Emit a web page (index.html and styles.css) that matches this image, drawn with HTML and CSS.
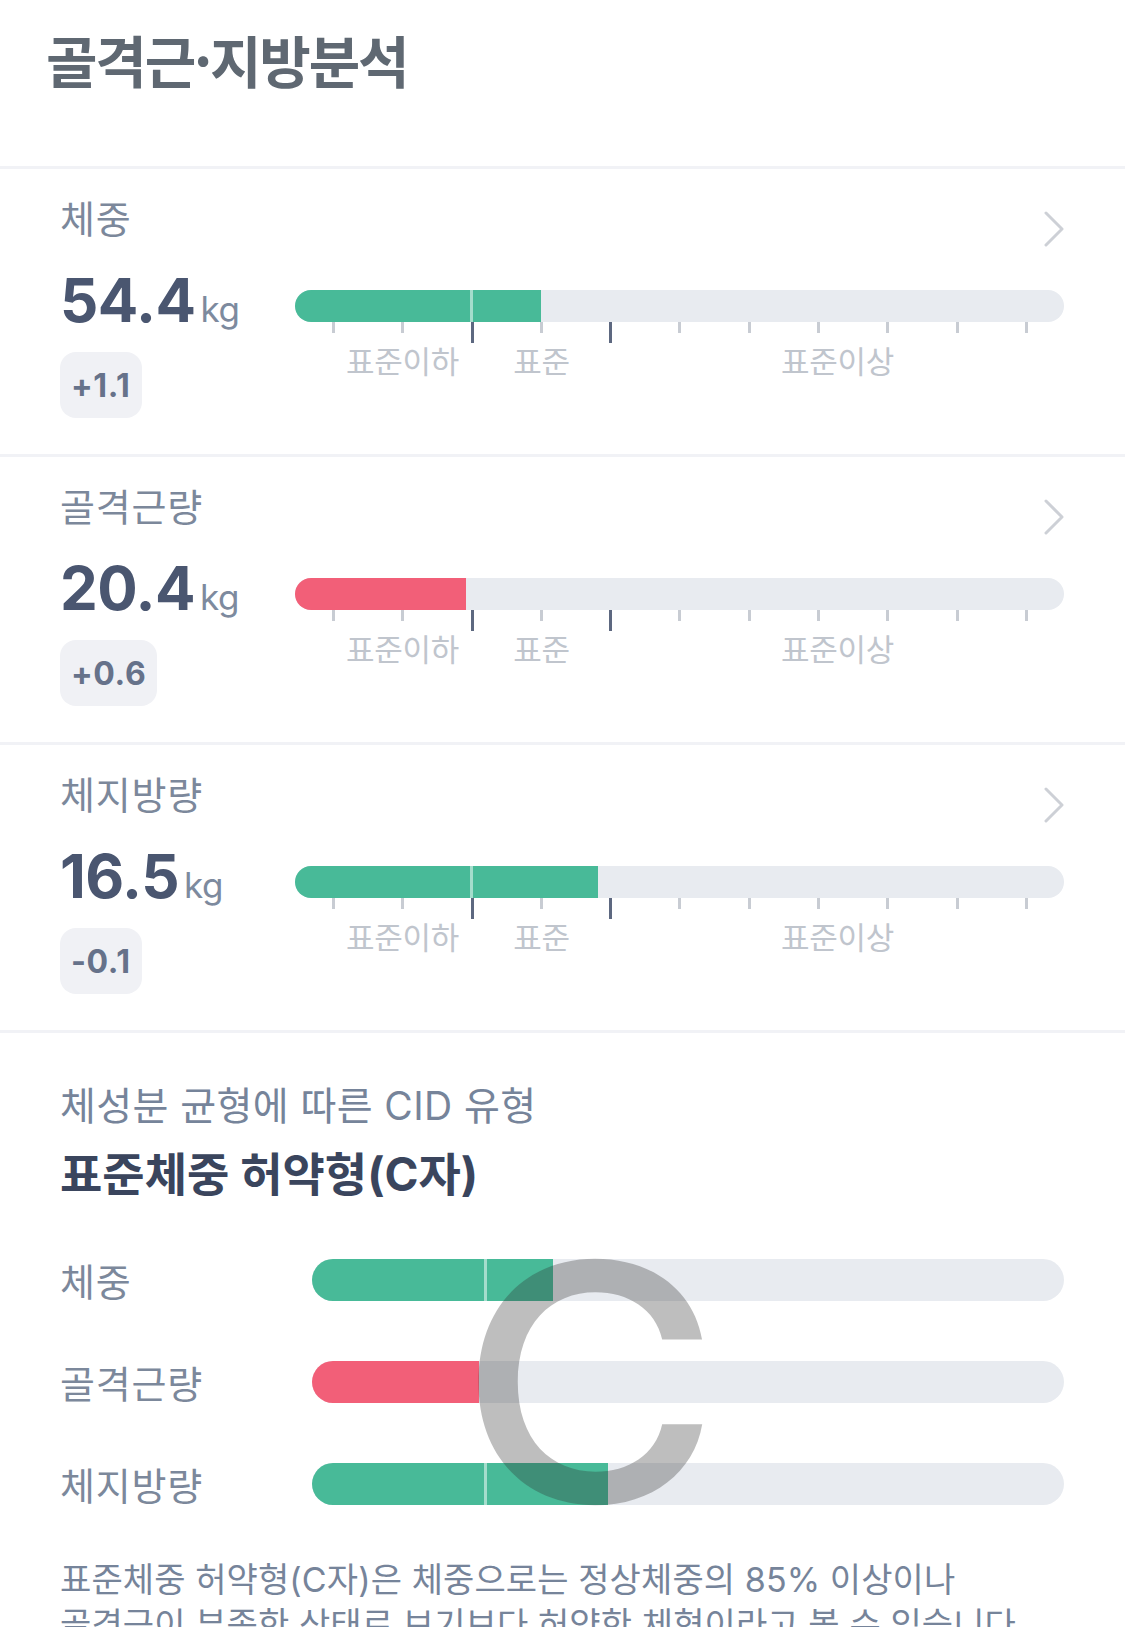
FILE: index.html
```html
<!DOCTYPE html>
<html lang="ko">
<head>
<meta charset="utf-8">
<title>골격근·지방분석</title>
<link rel="stylesheet" href="styles.css">
</head>
<body>
<div class="page">
  <header class="header">
    <h1 class="title">골격근·지방분석</h1>
  </header>

  <section class="metric">
    <div class="metric-head">
      <span class="metric-label">체중</span>
      <svg class="chevron" width="20" height="36" viewBox="0 0 20 36"><path d="M2 2 L18 18 L2 34" /></svg>
    </div>
    <div class="metric-body">
      <div class="metric-left">
        <div class="value"><span class="num">54.4</span><span class="unit">kg</span></div>
        <div class="badge">+1.1</div>
      </div>
      <div class="gauge">
        <div class="track"><div class="fill green" style="width:32%"></div></div>
        <div class="ticks">
          <i></i><i></i><i class="major"></i><i></i><i class="major"></i><i></i><i></i><i></i><i></i><i></i><i></i>
        </div>
        <div class="zones"><span>표준이하</span><span>표준</span><span>표준이상</span></div>
      </div>
    </div>
  </section>

  <section class="metric">
    <div class="metric-head">
      <span class="metric-label">골격근량</span>
      <svg class="chevron" width="20" height="36" viewBox="0 0 20 36"><path d="M2 2 L18 18 L2 34" /></svg>
    </div>
    <div class="metric-body">
      <div class="metric-left">
        <div class="value"><span class="num">20.4</span><span class="unit">kg</span></div>
        <div class="badge">+0.6</div>
      </div>
      <div class="gauge">
        <div class="track"><div class="fill red" style="width:22.2%"></div></div>
        <div class="ticks">
          <i></i><i></i><i class="major"></i><i></i><i class="major"></i><i></i><i></i><i></i><i></i><i></i><i></i>
        </div>
        <div class="zones"><span>표준이하</span><span>표준</span><span>표준이상</span></div>
      </div>
    </div>
  </section>

  <section class="metric">
    <div class="metric-head">
      <span class="metric-label">체지방량</span>
      <svg class="chevron" width="20" height="36" viewBox="0 0 20 36"><path d="M2 2 L18 18 L2 34" /></svg>
    </div>
    <div class="metric-body">
      <div class="metric-left">
        <div class="value"><span class="num">16.5</span><span class="unit">kg</span></div>
        <div class="badge">-0.1</div>
      </div>
      <div class="gauge">
        <div class="track"><div class="fill green" style="width:39.4%"></div></div>
        <div class="ticks">
          <i></i><i></i><i class="major"></i><i></i><i class="major"></i><i></i><i></i><i></i><i></i><i></i><i></i>
        </div>
        <div class="zones"><span>표준이하</span><span>표준</span><span>표준이상</span></div>
      </div>
    </div>
  </section>

  <section class="cid">
    <p class="cid-sub">체성분 균형에 따른 CID 유형</p>
    <h2 class="cid-title">표준체중 허약형(C자)</h2>
    <div class="cid-bars">
      <div class="cid-row">
        <span class="cid-label">체중</span>
        <div class="cid-track"><div class="fill green" style="width:32%"></div></div>
      </div>
      <div class="cid-row">
        <span class="cid-label">골격근량</span>
        <div class="cid-track"><div class="fill red" style="width:22.2%"></div></div>
      </div>
      <div class="cid-row">
        <span class="cid-label">체지방량</span>
        <div class="cid-track"><div class="fill green" style="width:39.4%"></div></div>
      </div>
      <span class="cid-letter">C</span>
    </div>
    <p class="cid-desc">표준체중 허약형(C자)은 체중으로는 정상체중의 85% 이상이나 골격근이 부족한 상태로 보기보다 허약한 체형이라고 볼 수 있습니다.</p>
  </section>
</div>
</body>
</html>
```

FILE: styles.css
```css
* { box-sizing: border-box; }

html, body {
  margin: 0;
  padding: 0;
  background: #ffffff;
}

body {
  font-family: "Inter", "Noto Sans CJK KR", sans-serif;
  overflow: hidden;
}

.page {
  width: 1125px;
}

.header {
  height: 169px;
  padding: 25px 46px 0;
  border-bottom: 3px solid #f1f2f6;
}

.title {
  margin: 0;
  font-family: "Noto Sans CJK KR", sans-serif;
  font-size: 56px;
  line-height: 68px;
  font-weight: 700;
  color: #5f6872;
  letter-spacing: -2.2px;
}

.metric {
  height: 288px;
  padding: 26px 61px 0 60px;
  border-bottom: 3px solid #f1f2f6;
}

.metric-head {
  display: flex;
  justify-content: space-between;
  align-items: flex-start;
  height: 44px;
}

.metric-label,
.cid-label {
  font-family: "Noto Sans CJK KR", sans-serif;
  font-size: 38px;
  line-height: 44px;
  font-weight: 400;
  color: #7c889b;
  letter-spacing: 0.8px;
}

.chevron {
  margin-top: 16px;
  flex: none;
}

.chevron path {
  fill: none;
  stroke: #cdd0d6;
  stroke-width: 3;
  stroke-linecap: round;
  stroke-linejoin: round;
}

.metric-body {
  display: grid;
  grid-template-columns: 235px 1fr;
  align-items: start;
  margin-top: 30px;
}

.value {
  display: flex;
  align-items: baseline;
  height: 62px;
}

.num {
  font-size: 60px;
  line-height: 62px;
  font-weight: 700;
  color: #4a5670;
  letter-spacing: -0.5px;
}

.unit {
  margin-left: 5px;
  font-size: 35px;
  line-height: 62px;
  font-weight: 400;
  color: #7d8a9e;
  letter-spacing: -0.5px;
}

.badge {
  display: inline-flex;
  align-items: center;
  height: 66px;
  margin-top: 21px;
  padding: 0 11px;
  border-radius: 16px;
  background: #f0f1f5;
  font-size: 32px;
  font-weight: 700;
  color: #66728a;
  letter-spacing: 0.6px;
}

.gauge {
  margin-top: 21px;
}

.track,
.cid-track {
  position: relative;
  height: 32px;
  border-radius: 16px;
  background: #e8ebf0;
  overflow: hidden;
}

.fill {
  position: relative;
  height: 100%;
  overflow: hidden;
}

.fill.green { background: #48ba98; }
.fill.red { background: #f25f78; }

.fill.green::after {
  content: "";
  position: absolute;
  top: 0;
  bottom: 0;
  left: 175px;
  width: 3px;
  background: rgba(255, 255, 255, 0.5);
}

.ticks {
  display: flex;
  justify-content: space-between;
  align-items: flex-start;
  height: 21px;
  padding: 0 36px 0 37px;
}

.ticks i {
  display: block;
  width: 3px;
  height: 11px;
  background: #c8ccd3;
}

.ticks i.major {
  height: 21px;
  background: #5d6880;
}

.zones {
  display: grid;
  grid-template-columns: 139px 139px 1fr;
  padding-left: 38px;
  margin-top: -1px;
}

.zones span {
  text-align: center;
  font-family: "Noto Sans CJK KR", sans-serif;
  font-size: 31px;
  line-height: 36px;
  color: #c0c5cd;
  letter-spacing: -0.3px;
}

.cid {
  padding: 50px 61px 0 60px;
}

.cid-sub {
  margin: 0;
  font-size: 39px;
  line-height: 46px;
  color: #76849a;
  letter-spacing: 0.4px;
}

.cid-title {
  margin: 18px 0 0;
  font-size: 46px;
  line-height: 54px;
  font-weight: 700;
  color: #3a455d;
  letter-spacing: 0;
}

.cid-bars {
  position: relative;
  display: flex;
  flex-direction: column;
  gap: 60px;
  margin-top: 57px;
}

.cid-row {
  display: grid;
  grid-template-columns: 252px 1fr;
  align-items: center;
  height: 42px;
}

.cid-track {
  height: 42px;
  border-radius: 21px;
}

.cid-track .fill.green::after {
  left: 172px;
}

.cid-letter {
  position: absolute;
  left: 405px;
  top: -41px;
  font-family: "Inter", sans-serif;
  font-size: 330px;
  line-height: 330px;
  font-weight: 500;
  color: rgba(45, 45, 45, 0.31);
  transform: scaleX(1.08);
  transform-origin: 78px 0;
  pointer-events: none;
}

.cid-desc {
  margin: 53px 0 0;
  font-size: 34px;
  line-height: 45px;
  color: #76849a;
  letter-spacing: 0.1px;
  word-break: keep-all;
}
```
